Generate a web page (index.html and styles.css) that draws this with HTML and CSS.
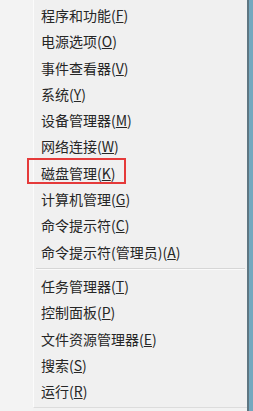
FILE: index.html
```html
<!DOCTYPE html>
<html lang="zh-CN">
<head>
<meta charset="utf-8">
<link rel="stylesheet" href="styles.css">
</head>
<body>
<div class="screen">
  <div class="gutter"></div>
  <div class="menu">
    <div class="group">
      <div class="item">程序和功能(<u>F</u>)</div>
      <div class="item">电源选项(<u>O</u>)</div>
      <div class="item">事件查看器(<u>V</u>)</div>
      <div class="item">系统(<u>Y</u>)</div>
      <div class="item">设备管理器(<u>M</u>)</div>
      <div class="item">网络连接(<u>W</u>)</div>
      <div class="item marked">磁盘管理(<u>K</u>)</div>
      <div class="item">计算机管理(<u>G</u>)</div>
      <div class="item">命令提示符(<u>C</u>)</div>
      <div class="item">命令提示符(管理员)(<u>A</u>)</div>
    </div>
    <div class="sep"></div>
    <div class="group">
      <div class="item">任务管理器(<u>T</u>)</div>
      <div class="item">控制面板(<u>P</u>)</div>
      <div class="item">文件资源管理器(<u>E</u>)</div>
      <div class="item">搜索(<u>S</u>)</div>
      <div class="item">运行(<u>R</u>)</div>
    </div>
  </div>
  <div class="edge"></div>
</div>
</body>
</html>
```

FILE: styles.css
```css
html, body {
  margin: 0;
  padding: 0;
  width: 253px;
  height: 411px;
  overflow: hidden;
  background: #f2f2f2;
}
.screen {
  display: flex;
  height: 411px;
}
.gutter {
  width: 33px;
  flex: none;
  background: #f3f3f3;
}
.menu {
  width: 214px;
  flex: none;
  height: 408px;
  background: #f0f0f0;
  border-left: 1px solid #fbfbfb;
  border-bottom: 1px solid #dcdcdc;
  box-sizing: border-box;
  padding-top: 2px;
  display: flex;
  flex-direction: column;
}
.group {
  display: flex;
  flex-direction: column;
}
.item {
  height: 26.3px;
  line-height: 26.3px;
  padding-left: 7px;
  font-family: "Noto Sans CJK SC", "Noto Sans", sans-serif;
  font-size: 14px;
  color: #262626;
  white-space: nowrap;
  position: relative;
}
.item u {
  text-decoration-thickness: 1px;
  text-underline-offset: 1px;
}
.marked::after {
  content: "";
  position: absolute;
  left: -7px;
  top: -2px;
  width: 99px;
  height: 26px;
  border: 2.5px solid #e53a3a;
  box-sizing: border-box;
}
.sep {
  height: 8px;
  display: flex;
  align-items: center;
  padding-left: 2px;
  padding-right: 2px;
}
.sep::before {
  content: "";
  flex: 1;
  height: 1px;
  background: #d6d6d6;
  border-bottom: 1px solid #fafafa;
}
.edge {
  flex: 1;
  background: #74a8bf;
  border-left: 2px solid #5e7682;
}
```
